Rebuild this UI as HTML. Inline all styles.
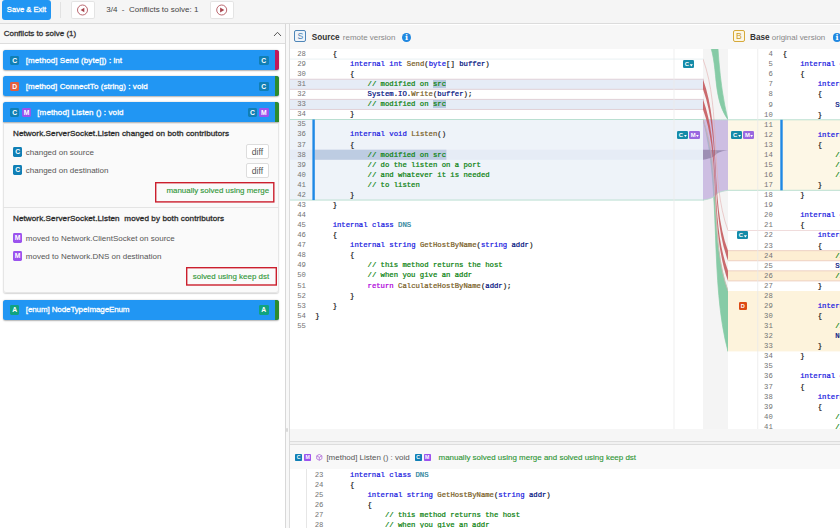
<!DOCTYPE html>
<html><head><meta charset="utf-8"><title>Merge conflicts</title>
<style>
*{box-sizing:border-box;margin:0;padding:0}
html,body{width:840px;height:528px;overflow:hidden;background:#fff}
body{position:relative;font-family:"Liberation Sans",sans-serif;font-size:8px;color:#333}
.a{position:absolute}
#topbar{position:absolute;left:0;top:0;width:840px;height:23.5px;background:#f5f5f5;border-bottom:1px solid #dcdcdc}
#save{position:absolute;left:2px;top:0;width:49px;height:19.5px;background:#2196f3;color:#fff;border-radius:3px;font-size:7.6px;line-height:19.6px;text-align:center;font-weight:normal;-webkit-text-stroke:0.3px;letter-spacing:0px}
#tsep{position:absolute;left:60.1px;top:1.5px;width:1px;height:16px;background:#e2e2e2}
.nav{position:absolute;top:0.6px;width:23.8px;height:18.8px;background:#fff;box-shadow:inset 0 0 0 1px #e4e4e4;border-radius:2px}
.nav svg{position:absolute;left:0;top:0}
#prog{position:absolute;left:106.3px;top:0.4px;line-height:19.5px;font-size:8px;color:#444;white-space:pre}
/* left panel */
#left{position:absolute;left:0;top:23.5px;width:285.5px;height:505px;background:#fff;border-right:1px solid #d8d8d8}
#lhead{position:absolute;left:0;top:0;width:284.5px;height:20.5px;background:#f7f7f7;border-bottom:1px solid #ddd;font-weight:normal;-webkit-text-stroke:0.3px;font-size:8px;line-height:19.5px;padding-left:3.7px;color:#333}
#split{position:absolute;left:285.5px;top:23.5px;width:4px;height:505px;background:#f8f8f8;border-right:1px solid #dcdcdc}
.item{position:absolute;left:3.2px;width:275.4px;height:20px;background:#2196f3;border-radius:2.5px;color:#fff;font-size:7.6px;line-height:20px;box-shadow:0 0.5px 1.5px rgba(0,0,0,.3);overflow:hidden;font-weight:normal;-webkit-text-stroke:0.3px}
.item .bd{-webkit-text-stroke:0}
.item .tx{position:absolute;left:22.6px;top:0.7px;white-space:pre}
.item .st{position:absolute;right:0;top:0;width:3.2px;height:100%}
.bd{position:absolute;width:9.6px;height:9.4px;border-radius:1.4px;color:#fff;font-size:6.8px;line-height:9.6px;text-align:center;font-weight:bold}
.bc{background:#107fb5}.bm{background:#9b53ee}.bdl{background:#e2603f}.ba{background:#10a37f}
#exp{position:absolute;left:3.2px;top:99px;width:275.4px;height:170.5px;background:#fafafa;border-radius:0 0 3px 3px;box-shadow:0 0.5px 1.2px rgba(0,0,0,.16), inset 0 0 0 1px #e6e6e6}
.ttl{position:absolute;left:9.8px;font-weight:normal;-webkit-text-stroke:0.32px;font-size:8.1px;letter-spacing:0.085px;color:#2e2e2e;white-space:pre}
.row{position:absolute;left:22.6px;font-size:8px;color:#555;white-space:pre}
.diff{position:absolute;left:243.1px;width:22.4px;height:15.3px;border:1px solid #ddd;border-radius:2px;background:#fff;font-size:8.6px;line-height:14.6px;text-align:center;color:#555}
.solved{position:absolute;color:#2f9636;font-size:7.95px;text-align:center;white-space:pre;-webkit-text-stroke:0.12px}
.solved svg{position:absolute;left:0;top:0}
.solved rect{fill:none;stroke:#cb1f2d;stroke-width:1.4}
/* panels */
.phead{position:absolute;top:24.5px;height:24.3px;background:#f7f7f7}
.pic{position:absolute;width:12px;height:11.5px;border-radius:2px;font-size:8.6px;line-height:10.2px;text-align:center}
.ptt{position:absolute;top:0;line-height:25.5px;font-size:8.2px;white-space:pre;color:#333}
.ptt b{color:#333}.ptt span{color:#888;font-size:7.95px}
.info{position:absolute;width:8.8px;height:8.8px;border-radius:50%;background:#2188e0;color:#fff;font-family:"DejaVu Serif",serif;font-size:8px;line-height:8.6px;text-align:center;font-weight:bold}
#src{position:absolute;left:290px;top:48.9px;width:414px;height:380px;overflow:hidden}
#base{position:absolute;left:727.5px;top:48.9px;width:113px;height:380px;overflow:hidden;background:#fff}
.bg{position:absolute;left:0;top:0}
#linkbg{position:absolute;left:703px;top:49px;width:25px;height:380px;background:#f4f4f4}
#links{position:absolute;left:703px;top:48.9px}
.ln{position:absolute;left:0;height:10.07px;line-height:10.07px;font-family:"Liberation Mono","DejaVu Sans Mono",monospace;font-size:7.272px;white-space:pre;color:#222}
.no{position:absolute;right:0;color:#737373;text-align:right}
.cd{position:absolute;left:0;-webkit-text-stroke:0.22px}
#src .no{left:0;width:15.9px}#src .cd{left:25.2px}
#src .ln{width:384px}
#base .no{left:0;width:45.3px}#base .cd{left:55.3px}
#base .ln{width:200px}
#res .no{left:0;width:33.4px}#res .cd{left:42.6px}
#res .ln{width:500px}
.k{color:#1a1ae0}.t{color:#267f99}.c{color:#0b820f}.f{color:#795e26}.v{color:#001080}.r{color:#af00db}
.hl{background:#b7c9de}
.regCM{fill:#eef3f9}.lnG{fill:#b4dccd}.lnC{fill:#e6f0f2}.lnR{fill:#efd8d8}
.chg{fill:#e6ecf6}.lnchg{fill:#dfcdd3}.chgsel{fill:#bdcce2}
.bar{fill:#1e88e5}.vsep{fill:#eaeaea}
.bregCM{fill:#fdf7e6}.bchg{fill:#fdeed3}.lnbchg{fill:#ecccbf}.bregD{fill:#fdf3dc}
.gband{fill:#86cba6;stroke:#86cba6;stroke-width:0.7}.pband{fill:rgba(184,162,216,0.65)}.pdark{fill:#9d8fb4}.rband{fill:#c4575a;fill-opacity:0.88}
.gline{fill:none;stroke:#b4dccd;stroke-width:0.8}
.rline{fill:none;stroke:#e2aeae;stroke-width:0.6}
.gb{position:absolute;height:8px;border-radius:1.3px;color:#fff;font-size:5.9px;line-height:8.4px;font-weight:bold;padding-left:1.9px;width:11px}
.gb.bc{background:#158ba8}.gb.bm{background:#9968e0}
.gb i{position:absolute;right:0.9px;top:4.3px;width:3.2px;height:2.3px;background:#fff;clip-path:polygon(0 0,100% 0,50% 100%)}
.gb.bd{width:8.4px;height:8.4px;line-height:8.4px;padding:0;text-align:center;font-size:5.6px;background:#dd4a14}
#hscroll{position:absolute;left:289.5px;top:429px;width:551px;height:11.5px;background:#f6f6f6}
#hsplit{position:absolute;left:289.5px;top:440.5px;width:551px;height:4px;background:#f1f1f1;border-top:1px solid #ddd;border-bottom:1px solid #ddd}
#rhead{position:absolute;left:289.5px;top:444.5px;width:551px;height:24.5px;background:#f8f8f8;font-size:7.98px;line-height:25px;white-space:pre;color:#555}
#res{position:absolute;left:290px;top:470.1px;width:550px;height:60px;overflow:hidden}
.sb{position:absolute;height:6.9px;width:7.3px;border-radius:0.8px;color:#fff;font-size:5.2px;line-height:7.7px;text-align:center;font-weight:bold}
#exp .bd{width:9.8px;height:9.7px;line-height:9.9px}
</style></head><body>
<div id="topbar">
 <div id="save">Save &amp; Exit</div><div id="tsep"></div>
 <div class="nav" style="left:70.8px"><svg width="24" height="19" viewBox="0 0 24 19"><circle cx="11.5" cy="9" r="5" fill="none" stroke="#a8434d" stroke-width="0.8"/><path d="M13.3,6.7 L13.3,11.3 L9.6,9 Z" fill="#a8434d"/></svg></div>
 <div id="prog">3/4  -  Conflicts to solve: 1</div>
 <div class="nav" style="left:210.4px"><svg width="24" height="19" viewBox="0 0 24 19"><circle cx="11.7" cy="9" r="5" fill="none" stroke="#a8434d" stroke-width="0.8"/><path d="M10.1,6.5 L10.1,11.5 L14.3,9 Z" fill="#a8434d"/></svg></div>
</div>
<div id="left">
 <div id="lhead">Conflicts to solve (1)<svg class="a" style="left:272.5px;top:7px" width="9" height="6" viewBox="0 0 9 6"><path d="M1,5 L4.5,1.3 L8,5" fill="none" stroke="#444" stroke-width="0.9"/></svg></div>
 <div class="item" style="top:26.5px"><div class="bd bc" style="left:6.7px;top:5.6px">C</div><div class="tx" style="font-size:8px;letter-spacing:0.075px">[method] Send (byte[]) : int</div><div class="bd bc" style="left:255.8px;top:5.6px">C</div><div class="st" style="background:#c2185b"></div></div>
 <div class="item" style="top:52.6px"><div class="bd bdl" style="left:6.7px;top:5.6px">D</div><div class="tx" style="font-size:8px;letter-spacing:0.056px">[method] ConnectTo (string) : void</div><div class="bd bc" style="left:255.8px;top:5.6px">C</div><div class="st" style="background:#2e8b2e"></div></div>
 <div class="item" style="top:78.7px;border-radius:2.5px 2.5px 0 0"><div class="bd bc" style="left:6.7px;top:5.6px">C</div><div class="bd bm" style="left:18.6px;top:5.6px">M</div><div class="tx" style="left:34.1px;font-size:8px;letter-spacing:0.108px">[method] Listen () : void</div><div class="bd bc" style="left:244.6px;top:5.6px">C</div><div class="bd bm" style="left:255.8px;top:5.6px">M</div><div class="st" style="background:#2e8b2e"></div></div>
 <div id="exp">
  <div class="ttl" style="top:6px">Network.ServerSocket.Listen changed on both contributors</div>
  <div class="bd bc" style="left:9.5px;top:24.5px">C</div><div class="row" style="top:25px">changed on source</div><div class="diff" style="top:21.7px">diff</div>
  <div class="bd bc" style="left:9.5px;top:42.5px">C</div><div class="row" style="top:43px">changed on destination</div><div class="diff" style="top:40px">diff</div>
  <div class="solved" style="left:152.3px;top:59.7px;width:119.5px;height:20.6px;line-height:18.2px;text-align:right;padding-right:5.8px"><svg width="119.5" height="20.6"><rect x="0.7" y="0.7" width="118.1" height="19.2"/></svg>manually solved using merge</div>
  <div class="a" style="left:0;top:84.5px;width:275.4px;height:1px;background:#e4e4e4"></div>
  <div class="ttl" style="top:91.5px">Network.ServerSocket.Listen  moved by both contributors</div>
  <div class="bd bm" style="left:9.5px;top:110.7px">M</div><div class="row" style="top:111.2px">moved to Network.ClientSocket on source</div>
  <div class="bd bm" style="left:9.5px;top:128.7px">M</div><div class="row" style="top:129.2px">moved to Network.DNS on destination</div>
  <div class="solved" style="left:183px;top:144.4px;width:91px;height:18.7px;line-height:20.8px;text-align:right;padding-right:8.1px"><svg width="91" height="18.7"><rect x="0.7" y="0.7" width="89.6" height="17.3"/></svg>solved using keep dst</div>
 </div>
 <div class="item" style="top:276.3px"><div class="bd ba" style="left:6.7px;top:5.6px">A</div><div class="tx" style="font-size:8px;letter-spacing:-0.11px">[enum] NodeTypeImageEnum</div><div class="bd ba" style="left:255.8px;top:5.6px">A</div><div class="st" style="background:#2e8b2e"></div></div>
</div>
<div id="split"></div>
<!-- panel headers -->
<div class="phead" style="left:289.5px;width:551px">
 <div class="pic" style="left:4.8px;top:5.8px;border:1.2px solid #4f86b8;color:#4a7fb0;background:#eef4fa">S</div>
 <div class="ptt" style="left:22.3px"><b>Source</b> <span style="margin-left:1px">remote version</span></div>
 <div class="info" style="left:112.7px;top:8.4px">i</div>
 <div class="pic" style="left:443.3px;top:5.8px;border:1.2px solid #d6a93a;color:#c99a2e;background:#fdf7e4">B</div>
 <div class="ptt" style="left:460.5px"><b>Base</b> <span>original version</span></div>
 <div class="info" style="left:543px;top:8.4px">i</div>
</div>
<div id="linkbg"></div>

<div id="src">
<svg class="bg" width="414" height="380" viewBox="0 48.90 414 380">
<rect class="regCM" x="0.00" y="119.39" width="414.00" height="80.56"/>
<rect class="lnC" x="0.00" y="58.52" width="414.00" height="0.9"/>
<rect class="lnG" x="0.00" y="118.94" width="414.00" height="0.9"/>
<rect class="lnG" x="0.00" y="199.50" width="414.00" height="0.9"/>
<rect class="chg" x="0.00" y="79.11" width="414.00" height="10.07"/>
<rect class="lnchg" x="0.00" y="78.66" width="414.00" height="0.9"/>
<rect class="lnchg" x="0.00" y="88.73" width="414.00" height="0.9"/>
<rect class="chg" x="0.00" y="99.25" width="414.00" height="10.07"/>
<rect class="lnchg" x="0.00" y="98.80" width="414.00" height="0.9"/>
<rect class="lnchg" x="0.00" y="108.87" width="414.00" height="0.9"/>
<rect class="chg" x="0.00" y="149.60" width="414.00" height="10.07"/>
<rect class="chgsel" x="24.80" y="149.60" width="131.62" height="10.07"/>
<rect class="bar" x="22.40" y="119.39" width="2.40" height="80.56"/>
<rect class="vsep" x="383.60" y="48.90" width="0.80" height="380.00"/>
</svg>
<div class="ln" style="top:0.00px"><span class="no">28</span><span class="cd">    {</span></div>
<div class="ln" style="top:10.07px"><span class="no">29</span><span class="cd">        <span class="k">internal</span> <span class="k">int</span> <span class="f">Send</span>(<span class="k">byte</span>[] <span class="v">buffer</span>)</span></div>
<div class="ln" style="top:20.14px"><span class="no">30</span><span class="cd">        {</span></div>
<div class="ln" style="top:30.21px"><span class="no">31</span><span class="cd">            <span class="c">// modified on <span class="hl">src</span></span></span></div>
<div class="ln" style="top:40.28px"><span class="no">32</span><span class="cd">            <span class="v">System</span>.<span class="v">IO</span>.<span class="f">Write</span>(<span class="v">buffer</span>);</span></div>
<div class="ln" style="top:50.35px"><span class="no">33</span><span class="cd">            <span class="c">// modified on <span class="hl">src</span></span></span></div>
<div class="ln" style="top:60.42px"><span class="no">34</span><span class="cd">        }</span></div>
<div class="ln" style="top:70.49px"><span class="no">35</span><span class="cd"></span></div>
<div class="ln" style="top:80.56px"><span class="no">36</span><span class="cd">        <span class="k">internal</span> <span class="k">void</span> <span class="f">Listen</span>()</span></div>
<div class="ln" style="top:90.63px"><span class="no">37</span><span class="cd">        {</span></div>
<div class="ln" style="top:100.70px"><span class="no">38</span><span class="cd">            <span class="c">// modified on src</span></span></div>
<div class="ln" style="top:110.77px"><span class="no">39</span><span class="cd">            <span class="c">// do the listen on a port</span></span></div>
<div class="ln" style="top:120.84px"><span class="no">40</span><span class="cd">            <span class="c">// and whatever it is needed</span></span></div>
<div class="ln" style="top:130.91px"><span class="no">41</span><span class="cd">            <span class="c">// to listen</span></span></div>
<div class="ln" style="top:140.98px"><span class="no">42</span><span class="cd">        }</span></div>
<div class="ln" style="top:151.05px"><span class="no">43</span><span class="cd">    }</span></div>
<div class="ln" style="top:161.12px"><span class="no">44</span><span class="cd"></span></div>
<div class="ln" style="top:171.19px"><span class="no">45</span><span class="cd">    <span class="k">internal</span> <span class="k">class</span> <span class="t">DNS</span></span></div>
<div class="ln" style="top:181.26px"><span class="no">46</span><span class="cd">    {</span></div>
<div class="ln" style="top:191.33px"><span class="no">47</span><span class="cd">        <span class="k">internal</span> <span class="k">string</span> <span class="f">GetHostByName</span>(<span class="k">string</span> <span class="v">addr</span>)</span></div>
<div class="ln" style="top:201.40px"><span class="no">48</span><span class="cd">        {</span></div>
<div class="ln" style="top:211.47px"><span class="no">49</span><span class="cd">            <span class="c">// this method returns the host</span></span></div>
<div class="ln" style="top:221.54px"><span class="no">50</span><span class="cd">            <span class="c">// when you give an addr</span></span></div>
<div class="ln" style="top:231.61px"><span class="no">51</span><span class="cd">            <span class="r">return</span> <span class="f">CalculateHostByName</span>(<span class="v">addr</span>);</span></div>
<div class="ln" style="top:241.68px"><span class="no">52</span><span class="cd">        }</span></div>
<div class="ln" style="top:251.75px"><span class="no">53</span><span class="cd">    }</span></div>
<div class="ln" style="top:261.82px"><span class="no">54</span><span class="cd">}</span></div>
<div class="ln" style="top:271.89px"><span class="no">55</span><span class="cd"></span></div>
</div>
<div id="base">
<svg class="bg" width="113" height="380" viewBox="0 48.90 113 380">
<rect class="bregCM" x="0.00" y="119.69" width="120.00" height="70.49"/>
<rect class="lnG" x="0.00" y="119.24" width="120.00" height="0.9"/>
<rect class="lnG" x="0.00" y="189.73" width="120.00" height="0.9"/>
<rect class="lnR" x="0.00" y="230.01" width="120.00" height="0.9"/>
<rect class="bregD" x="0.00" y="290.88" width="120.00" height="60.42"/>
<rect class="bchg" x="0.00" y="250.60" width="120.00" height="10.07"/>
<rect class="lnbchg" x="0.00" y="250.15" width="120.00" height="0.9"/>
<rect class="lnbchg" x="0.00" y="260.22" width="120.00" height="0.9"/>
<rect class="bchg" x="0.00" y="270.74" width="120.00" height="10.07"/>
<rect class="lnbchg" x="0.00" y="270.29" width="120.00" height="0.9"/>
<rect class="lnbchg" x="0.00" y="280.36" width="120.00" height="0.9"/>
<rect class="bar" x="52.30" y="119.69" width="2.40" height="70.49"/>
<rect class="vsep" x="29.40" y="48.90" width="0.80" height="380.00"/>
</svg>
<div class="ln" style="top:0.30px"><span class="no">4</span><span class="cd">{</span></div>
<div class="ln" style="top:10.37px"><span class="no">5</span><span class="cd">    <span class="k">internal</span> <span class="k">class</span> <span class="v">ServerSocket</span></span></div>
<div class="ln" style="top:20.44px"><span class="no">6</span><span class="cd">    {</span></div>
<div class="ln" style="top:30.51px"><span class="no">7</span><span class="cd">        <span class="k">internal</span> <span class="k">int</span> <span class="f">Send</span>(<span class="k">byte</span>[] <span class="v">buffer</span>)</span></div>
<div class="ln" style="top:40.58px"><span class="no">8</span><span class="cd">        {</span></div>
<div class="ln" style="top:50.65px"><span class="no">9</span><span class="cd">            <span class="v">System</span>.<span class="v">IO</span>.<span class="f">Write</span>(<span class="v">buffer</span>);</span></div>
<div class="ln" style="top:60.72px"><span class="no">10</span><span class="cd">        }</span></div>
<div class="ln" style="top:70.79px"><span class="no">11</span><span class="cd"></span></div>
<div class="ln" style="top:80.86px"><span class="no">12</span><span class="cd">        <span class="k">internal</span> <span class="k">void</span> <span class="f">Listen</span>()</span></div>
<div class="ln" style="top:90.93px"><span class="no">13</span><span class="cd">        {</span></div>
<div class="ln" style="top:101.00px"><span class="no">14</span><span class="cd">            <span class="c">// do the listen on a port</span></span></div>
<div class="ln" style="top:111.07px"><span class="no">15</span><span class="cd">            <span class="c">// and whatever it is needed</span></span></div>
<div class="ln" style="top:121.14px"><span class="no">16</span><span class="cd">            <span class="c">// to listen</span></span></div>
<div class="ln" style="top:131.21px"><span class="no">17</span><span class="cd">        }</span></div>
<div class="ln" style="top:141.28px"><span class="no">18</span><span class="cd">    }</span></div>
<div class="ln" style="top:151.35px"><span class="no">19</span><span class="cd"></span></div>
<div class="ln" style="top:161.42px"><span class="no">20</span><span class="cd">    <span class="k">internal</span> <span class="k">class</span> <span class="v">ClientSocket</span></span></div>
<div class="ln" style="top:171.49px"><span class="no">21</span><span class="cd">    {</span></div>
<div class="ln" style="top:181.56px"><span class="no">22</span><span class="cd">        <span class="k">internal</span> <span class="k">int</span> <span class="f">Send</span>(<span class="k">byte</span>[] <span class="v">buffer</span>)</span></div>
<div class="ln" style="top:191.63px"><span class="no">23</span><span class="cd">        {</span></div>
<div class="ln" style="top:201.70px"><span class="no">24</span><span class="cd">            <span class="c">// modified on dst</span></span></div>
<div class="ln" style="top:211.77px"><span class="no">25</span><span class="cd">            <span class="v">System</span>.<span class="v">IO</span>.<span class="f">Write</span>(<span class="v">buffer</span>);</span></div>
<div class="ln" style="top:221.84px"><span class="no">26</span><span class="cd">            <span class="c">// modified on dst</span></span></div>
<div class="ln" style="top:231.91px"><span class="no">27</span><span class="cd">        }</span></div>
<div class="ln" style="top:241.98px"><span class="no">28</span><span class="cd"></span></div>
<div class="ln" style="top:252.05px"><span class="no">29</span><span class="cd">        <span class="k">internal</span> <span class="k">void</span> <span class="f">ConnectTo</span>(<span class="k">string</span> <span class="v">addr</span>)</span></div>
<div class="ln" style="top:262.12px"><span class="no">30</span><span class="cd">        {</span></div>
<div class="ln" style="top:272.19px"><span class="no">31</span><span class="cd">            <span class="c">// connect to the host</span></span></div>
<div class="ln" style="top:282.26px"><span class="no">32</span><span class="cd">            <span class="v">Network</span>.<span class="f">Connect</span>(<span class="v">addr</span>);</span></div>
<div class="ln" style="top:292.33px"><span class="no">33</span><span class="cd">        }</span></div>
<div class="ln" style="top:302.40px"><span class="no">34</span><span class="cd">    }</span></div>
<div class="ln" style="top:312.47px"><span class="no">35</span><span class="cd"></span></div>
<div class="ln" style="top:322.54px"><span class="no">36</span><span class="cd">    <span class="k">internal</span> <span class="k">class</span> <span class="t">DNS</span></span></div>
<div class="ln" style="top:332.61px"><span class="no">37</span><span class="cd">    {</span></div>
<div class="ln" style="top:342.68px"><span class="no">38</span><span class="cd">        <span class="k">internal</span> <span class="k">string</span> <span class="f">GetHostByName</span>(<span class="k">string</span> <span class="v">addr</span>)</span></div>
<div class="ln" style="top:352.75px"><span class="no">39</span><span class="cd">        {</span></div>
<div class="ln" style="top:362.82px"><span class="no">40</span><span class="cd">            <span class="c">// this method returns the host</span></span></div>
<div class="ln" style="top:372.89px"><span class="no">41</span><span class="cd">            <span class="c">// when you give an addr</span></span></div>
</div>
<svg id="links" width="25" height="380" viewBox="0 48.90 25 380">
<path class="gband" d="M0,-127.50 C18.75,-53.34 6.25,45.53 25.00,119.69 L25,119.69 C6.25,93.08 18.75,57.61 0.00,31.00 Z"/>
<path class="gband" d="M0,119.39 C18.75,170.84 6.25,239.43 25.00,290.88 L25,351.30 C6.25,281.73 18.75,188.96 0.00,119.39 Z"/>
<path class="pband" d="M0,119.39 C18.75,119.48 6.25,119.60 25.00,119.69 L25,190.18 C6.25,193.11 18.75,197.02 0.00,199.95 Z"/>
<path class="pdark" d="M0,149.60 C18.75,149.78 6.25,150.02 25.00,150.20 L25,150.20 C6.25,153.04 18.75,156.83 0.00,159.67 Z"/>
<path class="gline" d="M0,119.39 C18.75,119.48 6.25,119.60 25.00,119.69"/>
<path class="gline" d="M0,199.95 C18.75,197.02 6.25,193.11 25.00,190.18"/>
<path class="rline" d="M0,58.97 C18.75,110.42 6.25,179.01 25.00,230.46"/>
<path class="rline" d="M0,119.39 C18.75,170.84 6.25,239.43 25.00,290.88"/>
<path class="rband" d="M0,79.11 C18.75,130.56 6.25,199.15 25.00,250.60 L25,260.67 C6.25,209.22 18.75,140.63 0.00,89.18 Z"/>
<path class="rband" d="M0,99.25 C18.75,150.70 6.25,219.29 25.00,270.74 L25,280.81 C6.25,229.36 18.75,160.77 0.00,109.32 Z"/>
</svg>
<div class="gb bc" style="left:682.80px;top:60.00px">C<i></i></div>
<div class="gb bc" style="left:676.90px;top:130.50px">C<i></i></div>
<div class="gb bm" style="left:688.90px;top:130.50px">M<i></i></div>
<div class="gb bc" style="left:731.10px;top:130.50px">C<i></i></div>
<div class="gb bm" style="left:743.10px;top:130.50px">M<i></i></div>
<div class="gb bc" style="left:736.90px;top:231.00px">C<i></i></div>
<div class="gb bd" style="left:738.50px;top:302.00px">D</div>
<div id="res">
<div class="ln" style="top:0.00px"><span class="no">23</span><span class="cd">    <span class="k">internal</span> <span class="k">class</span> <span class="t">DNS</span></span></div>
<div class="ln" style="top:10.07px"><span class="no">24</span><span class="cd">    {</span></div>
<div class="ln" style="top:20.14px"><span class="no">25</span><span class="cd">        <span class="k">internal</span> <span class="k">string</span> <span class="f">GetHostByName</span>(<span class="k">string</span> <span class="v">addr</span>)</span></div>
<div class="ln" style="top:30.21px"><span class="no">26</span><span class="cd">        {</span></div>
<div class="ln" style="top:40.28px"><span class="no">27</span><span class="cd">            <span class="c">// this method returns the host</span></span></div>
<div class="ln" style="top:50.35px"><span class="no">28</span><span class="cd">            <span class="c">// when you give an addr</span></span></div>
<div class="ln" style="top:60.42px"><span class="no">29</span><span class="cd">            <span class="r">return</span> <span class="f">CalculateHostByName</span>(<span class="v">addr</span>);</span></div>
</div>
<div id="hscroll"></div><div id="hsplit"></div>
<div class="a" style="left:305.8px;top:469px;width:0.9px;height:60px;background:#e6e6e6;z-index:3"></div>
<div class="a" style="left:285.8px;top:428px;width:2.6px;height:4px;background:#d9d9d9;border-radius:1px"></div>
<div id="rhead">
 <div class="sb bc" style="left:5.4px;top:9.5px">C</div><div class="sb bm" style="left:14.5px;top:9.5px">M</div>
 <svg class="a" style="left:26.3px;top:9.5px" width="7" height="7" viewBox="0 0 7 7"><path d="M3.3,0.4 L5.9,1.8 L5.9,4.8 L3.3,6.3 L0.7,4.8 L0.7,1.8 Z M0.9,1.9 L3.3,3.3 L5.7,1.9 M3.3,3.3 L3.3,6.1" fill="none" stroke="#a961d6" stroke-width="0.75" stroke-linejoin="round"/></svg>
 <span class="a" style="left:36.9px;top:0">[method] Listen () : void</span>
 <div class="sb bc" style="left:125px;top:9.5px">C</div><div class="sb bm" style="left:134.1px;top:9.5px">M</div>
 <span class="a" style="left:149px;top:0;color:#2f9636;-webkit-text-stroke:0.12px">manually solved using merge and solved using keep dst</span>
</div>
</body></html>
